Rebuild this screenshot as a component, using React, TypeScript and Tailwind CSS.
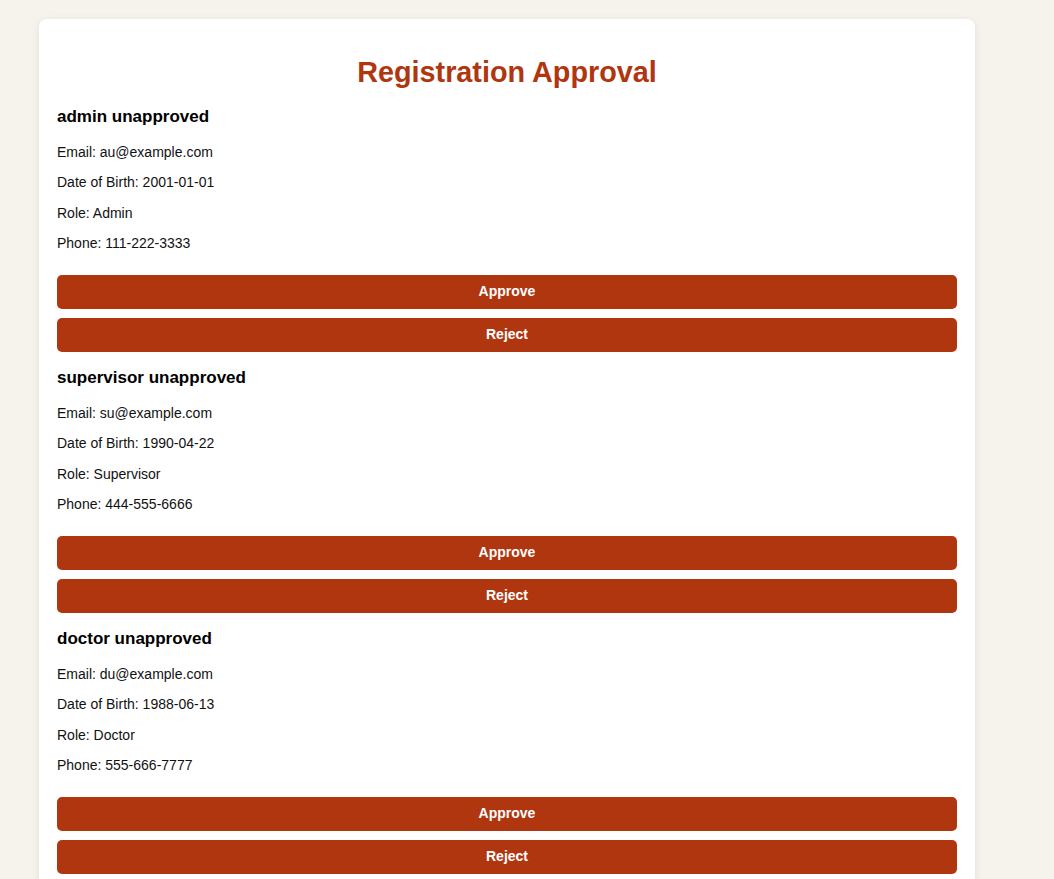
const users = [
  {
    name: 'admin unapproved',
    email: 'au@example.com',
    dob: '2001-01-01',
    role: 'Admin',
    phone: '111-222-3333',
  },
  {
    name: 'supervisor unapproved',
    email: 'su@example.com',
    dob: '1990-04-22',
    role: 'Supervisor',
    phone: '444-555-6666',
  },
  {
    name: 'doctor unapproved',
    email: 'du@example.com',
    dob: '1988-06-13',
    role: 'Doctor',
    phone: '555-666-7777',
  },
];

export default function App() {
  return (
    <div
      className="min-h-screen bg-[#f6f3ec] pt-[19px] pl-[39px] pb-10"
      style={{ fontFamily: '"Liberation Sans", Arial, sans-serif' }}
    >
      <div className="flex w-[936px] flex-col rounded-lg bg-white px-[18px] pt-[18px] pb-[18px] shadow-[0_2px_8px_rgba(0,0,0,0.08)]">
        <h1 className="mt-[19px] mb-[2px] text-center text-[28.8px] font-bold leading-[33px] text-[#b0360f]">
          Registration Approval
        </h1>

        {users.map((u) => (
          <div key={u.email} className="mt-[16px] flex flex-col">
            <h3 className="text-[17px] font-bold leading-[20px] text-black">{u.name}</h3>
            <div className="mt-[17px] flex flex-col gap-[14.33px] text-[14px] leading-[16px] text-[#111]">
              <p>Email: {u.email}</p>
              <p>Date of Birth: {u.dob}</p>
              <p>Role: {u.role}</p>
              <p>Phone: {u.phone}</p>
            </div>
            <button className="mt-[24px] h-[34px] w-full rounded-[5px] bg-[#b0360f] text-[14px] font-bold text-white">
              Approve
            </button>
            <button className="mt-[9px] h-[34px] w-full rounded-[5px] bg-[#b0360f] text-[14px] font-bold text-white">
              Reject
            </button>
          </div>
        ))}
      </div>
    </div>
  );
}
